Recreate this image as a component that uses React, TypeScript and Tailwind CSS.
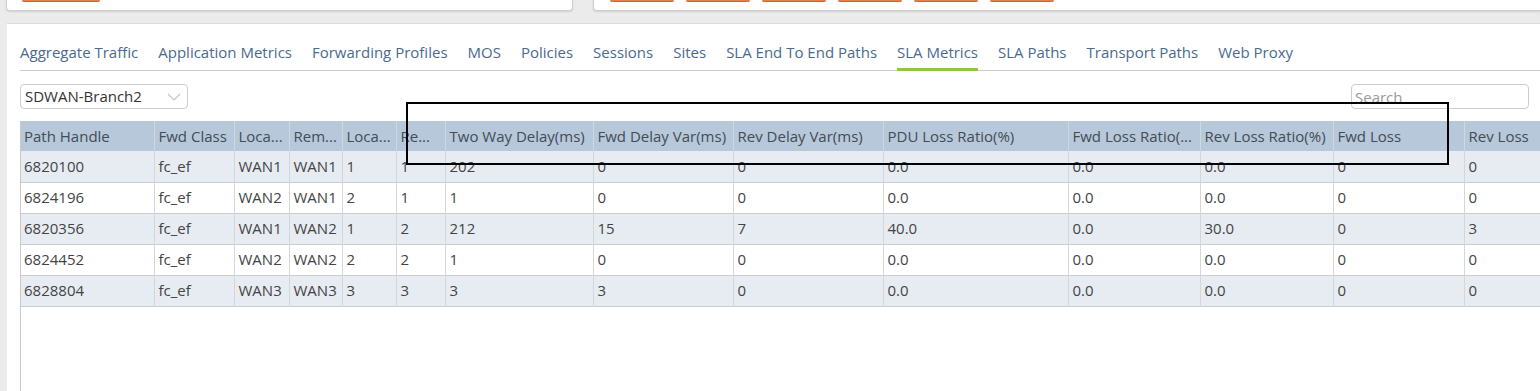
import React from "react";

const tabs = [
  "Aggregate Traffic",
  "Application Metrics",
  "Forwarding Profiles",
  "MOS",
  "Policies",
  "Sessions",
  "Sites",
  "SLA End To End Paths",
  "SLA Metrics",
  "SLA Paths",
  "Transport Paths",
  "Web Proxy",
];

const cols: { label: string; w: number }[] = [
  { label: "Path Handle", w: 133 },
  { label: "Fwd Class", w: 80 },
  { label: "Loca...", w: 55 },
  { label: "Rem...", w: 53 },
  { label: "Loca...", w: 54 },
  { label: "Re...", w: 49 },
  { label: "Two Way Delay(ms)", w: 148 },
  { label: "Fwd Delay Var(ms)", w: 140 },
  { label: "Rev Delay Var(ms)", w: 150 },
  { label: "PDU Loss Ratio(%)", w: 185 },
  { label: "Fwd Loss Ratio(...", w: 132 },
  { label: "Rev Loss Ratio(%)", w: 133 },
  { label: "Fwd Loss", w: 131 },
  { label: "Rev Loss", w: 130 },
];

const rows = [
  ["6820100", "fc_ef", "WAN1", "WAN1", "1", "1", "202", "0", "0", "0.0", "0.0", "0.0", "0", "0"],
  ["6824196", "fc_ef", "WAN2", "WAN1", "2", "1", "1", "0", "0", "0.0", "0.0", "0.0", "0", "0"],
  ["6820356", "fc_ef", "WAN1", "WAN2", "1", "2", "212", "15", "7", "40.0", "0.0", "30.0", "0", "3"],
  ["6824452", "fc_ef", "WAN2", "WAN2", "2", "2", "1", "0", "0", "0.0", "0.0", "0.0", "0", "0"],
  ["6828804", "fc_ef", "WAN3", "WAN3", "3", "3", "3", "3", "0", "0.0", "0.0", "0.0", "0", "0"],
];

export default function App() {
  return (
    <div
      className="relative w-[1540px] h-[391px] overflow-hidden bg-[#ebebeb]"
      style={{ fontFamily: '"Open Sans", "Noto Sans", sans-serif' }}
    >
      {/* top cards */}
      <div className="flex h-[23px] pl-[6px]">
        <div className="w-[567px] h-[11px] bg-white border border-t-0 border-[#cfcfcf] rounded-b-[4px] shadow-[0_1px_2px_rgba(0,0,0,0.12)] overflow-hidden">
          <div className="pl-[15px]">
            <div className="w-[78px] h-[2px] bg-[#e4804a] border-b border-[#c86a38] rounded-b-[2px]" />
          </div>
        </div>
        <div className="ml-[20px] flex-1 h-[11px] bg-white border border-t-0 border-r-0 border-[#cfcfcf] rounded-bl-[4px] shadow-[0_1px_2px_rgba(0,0,0,0.12)] overflow-hidden">
          <div className="flex gap-[12px] pl-[16px]">
            {[0, 1, 2, 3, 4, 5].map((i) => (
              <div
                key={i}
                className="w-[64px] h-[2px] bg-[#e4804a] border-b border-[#c86a38] rounded-b-[2px]"
              />
            ))}
          </div>
        </div>
      </div>

      {/* main panel */}
      <div className="ml-[7px] w-[1560px] h-[400px] bg-white border-t border-[#dcdcdc]">
        <div className="ml-[13px] w-[1520px] flex gap-[20px] border-b border-[#c6ced6] pt-[17px]">
          {tabs.map((t) => (
            <div
              key={t}
              className={
                "text-[15px] leading-[22px] pb-[5px] -mb-px border-b-[3px] whitespace-nowrap " +
                (t === "SLA Metrics"
                  ? "border-[#8dc63f] text-[#4a6a8e]"
                  : "border-transparent text-[#4a6a8e]")
              }
            >
              {t}
            </div>
          ))}
        </div>

        <div className="ml-[13px] w-[1509px] flex justify-between items-center mt-[13px]">
          <div className="w-[168px] h-[25px] border border-[#cccccc] rounded-[4px] flex items-center justify-between pl-[4px] pr-[6px]">
            <span className="text-[15px] text-[#333333] leading-none">SDWAN-Branch2</span>
            <svg width="14" height="8" viewBox="0 0 14 8" fill="none">
              <path d="M1 1 L7 7 L13 1" stroke="#c4c4c4" strokeWidth="1.2" />
            </svg>
          </div>
          <div className="w-[178px] h-[25px] border border-[#cccccc] rounded-[4px] flex items-start pl-[3px] pt-[2px]">
            <span className="text-[15px] text-[#9a9a9a] leading-[20px]">Search</span>
          </div>
        </div>

        <div className="ml-[13px] mt-[12px] w-[1600px] h-[300px] border-l border-[#c8c8c8]">
          <table className="table-fixed border-collapse text-[15px] text-[#444444]">
            <colgroup>
              {cols.map((c, i) => (
                <col key={i} style={{ width: c.w }} />
              ))}
            </colgroup>
            <thead>
              <tr className="bg-[#b6c8da] h-[30px]">
                {cols.map((c, i) => (
                  <th
                    key={i}
                    className={
                      "text-left font-normal text-[#444c55] border-r border-[#cdd8e3] whitespace-nowrap overflow-hidden " +
                      (i === 0 ? "pl-[3px]" : "pl-[4px]")
                    }
                  >
                    {c.label}
                  </th>
                ))}
              </tr>
            </thead>
            <tbody>
              {rows.map((r, ri) => (
                <tr
                  key={ri}
                  className={
                    "h-[31px] border-b border-[#c9cdd2] " +
                    (ri % 2 === 0 ? "bg-[#e7ecf3]" : "bg-white")
                  }
                >
                  {r.map((v, ci) => (
                    <td
                      key={ci}
                      className={
                        "border-r border-[#d3d6da] whitespace-nowrap " +
                        (ci === 0 ? "pl-[3px]" : "pl-[4px]")
                      }
                    >
                      {v}
                    </td>
                  ))}
                </tr>
              ))}
            </tbody>
          </table>
        </div>
      </div>

      {/* annotation rectangle */}
      <div className="absolute left-[406px] top-[102px] w-[1043px] h-[63px] border-2 border-black" />
    </div>
  );
}
